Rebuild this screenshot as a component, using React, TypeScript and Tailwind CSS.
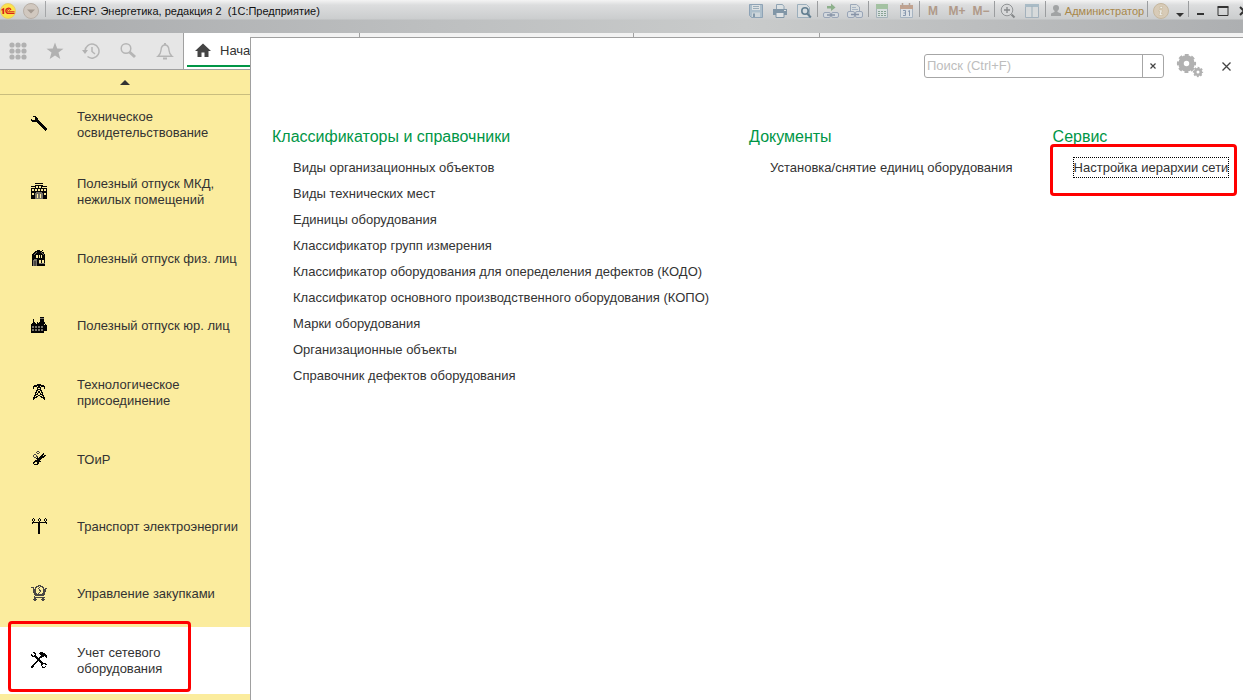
import React from "react";

type PixelArt = string[];

const WRENCH: PixelArt = [
  "..###...........",
  "....##..........",
  "....###.........",
  "#...###.........",
  "########........",
  ".########.......",
  "......####......",
  ".......####.....",
  "........####....",
  ".........####...",
  "..........####..",
  "...........####.",
  "............####",
  ".............###",
  "..............#.",
];

const BUILDING: PixelArt = [
  "....########....",
  "................",
  "....########....",
  "#####..#..######",
  "....#..#..#.....",
  "################",
  "#..#..#..#..#..#",
  "#..#..#..#..#..#",
  "################",
  "#####gggggg#####",
  "#..#gggggggg#..#",
  "#..#gg.gg.gg#..#",
  "####gg.gg.gg####",
  "####gg.gg.gg####",
  "####gg.gg.gg####",
  "####gggggggg####",
];

const HOUSE: PixelArt = [
  "......###..#....",
  "....#######.....",
  "...##g####g##...",
  "..##g######g#...",
  ".##g########g#..",
  ".####..#.#.###..",
  ".####..#.#.###..",
  ".####..#.#.###..",
  ".#############..",
  ".##ggg########..",
  ".#gggg##..#..#..",
  ".#gddg##..#..#..",
  ".#gddg##..#..#..",
  ".#gddg##gggggg..",
  ".#gddg########..",
  ".#gddg########..",
];

const FACTORY: PixelArt = [
  ".........####...",
  ".........gggg...",
  "..#......####...",
  "..#......####...",
  "..#......####...",
  "..##..#.######..",
  ".####.########..",
  "#############.#.",
  "################",
  "#gg#gg#gg#gg####",
  "#gg#gg#gg#gg####",
  "################",
  "#gg#gg#gg#gg####",
  "#gg#gg#gg#gg####",
  "#############...",
  "#############...",
];

const PYLON: PixelArt = [
  "......####......",
  "...##########...",
  "..####.##.####..",
  "..#...####...#..",
  "..#...#..#...#..",
  "......####......",
  ".....##..##.....",
  ".....#.##.#.....",
  "....##.##.##....",
  "....#.#..#.#....",
  "....###..###....",
  "...##..##..##...",
  "...#.##..##.#...",
  "..####....####..",
  "..##........##..",
  "..#..........#..",
];

const REPAIR: PixelArt = [
  "......dd........",
  ".....d..d.......",
  "......dd....#...",
  "...dd......##...",
  "..d..d....##.##.",
  "..d..dd..#####..",
  "...dd.#.#####...",
  ".....######.....",
  "......####......",
  "....#####.......",
  "...#######......",
  "..##..##........",
  "..#...##........",
  "...####.........",
];

const POWER_LINE: PixelArt = [
  "..#.....#.....#.",
  ".#.#...#.#...#.#",
  ".#.#...#.#...#.#",
  "..#.....#.....#.",
  ".###############",
  ".#.....##......#",
  ".......##.......",
  ".......##.......",
  ".......##.......",
  ".......##.......",
  ".......##.......",
  ".......##.......",
  ".......##.......",
  ".......##.......",
  ".......##.......",
  ".......##.......",
];

const CART: PixelArt = [
  ".......ddd......",
  ".....ddd.ddd....",
  "ddd.dd..d..dd...",
  "..d.d..d....d.dd",
  "..ddd...d...ddd.",
  "..ddd...dd..ddd.",
  "..ddd....d..ddd.",
  "..ddd...d...dd..",
  "...ddd.d...ddd..",
  "...ddddddddddd..",
  "....ddddddddd...",
  "...d............",
  "...ddddddddddd..",
  "...dd......dd...",
  "..dddd....dddd..",
  "...dd......dd...",
];

const TOOLS: PixelArt = [
  "..##.....###....",
  "...##...######..",
  "#...#....######.",
  "##.##.....######",
  ".#####...####.##",
  "....###.###....#",
  ".....####.......",
  "......###.......",
  "......####......",
  ".....##.###.....",
  "....##...###....",
  "...##.....#####.",
  "..##......##..##",
  ".##.......#.....",
  "###........#..#.",
  "##.........###..",
];

const INKS: [string, string][] = [
  ["#", "#050505"],
  ["g", "#77736a"],
  ["d", "#4a4744"],
];

function tracePixels(art: PixelArt, ink: string) {
  let d = "";
  art.forEach((row, y) => {
    for (let x = 0; x < row.length; x++) {
      if (row[x] !== ink) continue;
      const start = x;
      while (row[x + 1] === ink) x++;
      const run = x - start + 1;
      d += `M${start} ${y}h${run}v1h-${run}z`;
    }
  });
  return d;
}

function PixelIcon({ art }: { art: PixelArt }) {
  return (
    <svg className="mb-0.5 size-4 shrink-0" viewBox="0 0 16 16" shapeRendering="crispEdges" aria-hidden="true">
      {INKS.map(([ink, color]) => (
        <path key={ink} d={tracePixels(art, ink)} fill={color} />
      ))}
    </svg>
  );
}

const SECTIONS: { label: string; art: PixelArt; current?: boolean }[] = [
  { label: "Техническое освидетельствование", art: WRENCH },
  { label: "Полезный отпуск МКД, нежилых помещений", art: BUILDING },
  { label: "Полезный отпуск физ. лиц", art: HOUSE },
  { label: "Полезный отпуск юр. лиц", art: FACTORY },
  { label: "Технологическое присоединение", art: PYLON },
  { label: "ТОиР", art: REPAIR },
  { label: "Транспорт электроэнергии", art: POWER_LINE },
  { label: "Управление закупками", art: CART },
  { label: "Учет сетевого оборудования", art: TOOLS, current: true },
];

const CATALOGS = [
  "Виды организационных объектов",
  "Виды технических мест",
  "Единицы оборудования",
  "Классификатор групп измерения",
  "Классификатор оборудования для опеределения дефектов (КОДО)",
  "Классификатор основного производственного оборудования (КОПО)",
  "Марки оборудования",
  "Организационные объекты",
  "Справочник дефектов оборудования",
];

function Icon({ children }: { children: React.ReactNode }) {
  return (
    <svg className="size-4 shrink-0" viewBox="0 0 16 16" fill="none" aria-hidden="true">
      {children}
    </svg>
  );
}

function BarButton({ label, children }: { label: string; children: React.ReactNode }) {
  return (
    <button type="button" aria-label={label} className="flex h-5 w-6 items-center justify-center text-xs font-bold text-[#b09a89]">
      {children}
    </button>
  );
}

function Separator() {
  return <span className="mx-px h-4 w-px shrink-0 self-start bg-[#9b9d9f]" />;
}

function TitleBar() {
  return (
    <header className="flex h-[33px] items-start justify-between overflow-hidden bg-[linear-gradient(to_bottom,#f4f4f4_0px,#dcddde_5px,#cbcdce_19px,transparent_20px),linear-gradient(to_right,#a9abad,#bdbfc0_35%,#c9cbcb_60%,#adafb1)] pt-px">
      <div className="flex h-5 items-center">
        <button type="button" aria-label="Главное меню" className="flex w-4 justify-center">
          <svg className="size-4" viewBox="0 0 16 16" aria-hidden="true">
            <circle cx="8" cy="8" r="7.5" fill="#fbe34a" stroke="#e3c66c" strokeWidth="0.8" />
            <path d="M1.5 6.2 4.200 4.800V11H2.400V7.300L1.500 7.800z" fill="#d8231c" />
            <path d="M10.900 6.900A2.600 2.600 0 1 0 8.500 10.400H14.500" fill="none" stroke="#d8231c" strokeWidth="1.300" />
            <path d="M9.500 7.600A1.100 1.100 0 1 0 8.600 8.700H14.500" fill="none" stroke="#d8231c" strokeWidth="0.900" />
          </svg>
        </button>
        <button type="button" aria-label="Меню" className="ml-[7px] flex w-4 justify-center">
          <Icon>
            <circle cx="8" cy="8" r="7.500" fill="#d1c8bf" stroke="#b8afa6" />
            <path d="M4 6.500h8L8 10.500z" fill="#a49a91" />
          </Icon>
        </button>
        <span className="ml-[6px] h-4 w-px self-start bg-[#a4a6a8]" />
        <h1 className="ml-[10px] whitespace-pre text-[11px] leading-5 text-[#111]">1С:ERP. Энергетика, редакция 2  (1С:Предприятие)</h1>
      </div>
      <div className="-mr-[13px] flex h-5 shrink-0 items-center">
        <BarButton label="Сохранить">
          <Icon>
            <path d="M1.500 1.500h13v13h-11l-2-2z" fill="#adbfcc" stroke="#8ea3b6" />
            <path d="M4 2h8v5H4z" fill="#dde1e3" />
            <path d="M5 3.500h6M5 5.500h6" stroke="#9badb9" />
            <path d="M4 9.500h8V14H4z" fill="#ced6db" />
            <path d="M5 10.500h2V14H5z" fill="#8398a9" />
          </Icon>
        </BarButton>
        <BarButton label="Печать">
          <Icon>
            <path d="M4.500 1.500h6l1.500 2V7H4.500z" fill="#dce1e3" stroke="#90a4b4" />
            <path d="M1 6h14v6H1z" fill="#8196a7" />
            <path d="M4 9.500h8v5H4z" fill="#e0e3e5" stroke="#8196a7" />
            <path d="M12 7.500h2" stroke="#dce1e3" />
          </Icon>
        </BarButton>
        <BarButton label="Предварительный просмотр">
          <Icon>
            <path d="M1.500 1.500h9l3 3v10h-12z" fill="#dadee0" stroke="#9baebc" />
            <circle cx="9" cy="8" r="3.200" fill="#d5dce0" stroke="#637f91" strokeWidth="1.600" />
            <path d="m11.300 10.500 3.500 4" stroke="#637f91" strokeWidth="2" />
          </Icon>
        </BarButton>
        <Separator />
        <BarButton label="Получить ссылку">
          <Icon>
            <path d="M4 3h4V.5l4.500 4L8 8V5.500H4z" fill="#8db08b" />
            <rect x="0.500" y="9.500" width="7" height="5" rx="1.500" fill="#d4d9de" stroke="#99a5b7" />
            <rect x="8.500" y="9.500" width="7" height="5" rx="1.500" fill="#d4d9de" stroke="#99a5b7" />
            <path d="M4 12h8" stroke="#8793a6" strokeWidth="1.500" />
          </Icon>
        </BarButton>
        <BarButton label="Перейти по ссылке">
          <Icon>
            <path d="M3.500 8V1.500h6L12.500 4v4" fill="#d8dddf" stroke="#9ca8b8" />
            <path d="M5 4.500h4M5 6.500h6" stroke="#a8b5c4" />
            <rect x="0.500" y="8.500" width="7" height="6" rx="1.500" fill="#d4d9de" stroke="#99a5b7" />
            <rect x="8.500" y="8.500" width="7" height="6" rx="1.500" fill="#d4d9de" stroke="#99a5b7" />
            <path d="M4 11.500h8" stroke="#8793a6" strokeWidth="1.500" />
          </Icon>
        </BarButton>
        <Separator />
        <BarButton label="Калькулятор">
          <Icon>
            <path d="M2.500 1.500h11v13h-11z" fill="#d9dfe0" stroke="#a5b3ba" />
            <path d="M2 1h12v5H2z" fill="#a4c2a2" />
            <path d="M4 8.500h8M4 10.500h8M4 12.500h8" stroke="#87a394" strokeDasharray="2 1" />
          </Icon>
        </BarButton>
        <BarButton label="Календарь">
          <Icon>
            <path d="M2.500 2.500h12v12h-12z" fill="#dce0e4" stroke="#a7b4c1" />
            <path d="M2 2h13v4H2z" fill="#c1a28f" />
            <path d="M4.500 0v4M11.500 0v4" stroke="#b4a296" strokeWidth="1.500" />
            <path d="M5 7.500h2.500v5H5M5.500 10h2M10 8.500l1.500-1v5.500" stroke="#8999af" />
          </Icon>
        </BarButton>
        <Separator />
        <BarButton label="Память">M</BarButton>
        <BarButton label="Прибавить к памяти">M+</BarButton>
        <BarButton label="Вычесть из памяти">M−</BarButton>
        <Separator />
        <BarButton label="Масштаб">
          <Icon>
            <circle cx="7" cy="7" r="5.800" fill="#d8d9da" stroke="#929597" />
            <path d="M4 7h6M7 4v6" stroke="#85888a" strokeWidth="1.300" />
            <path d="m11.500 11.500 3 3" stroke="#85888a" strokeWidth="2" />
          </Icon>
        </BarButton>
        <BarButton label="Панели">
          <Icon>
            <path d="M1.500 1.500h13v13h-13z" fill="#d7dadb" stroke="#a3b1bc" />
            <path d="M1 1h14v3H1z" fill="#a9bbc6" />
            <path d="M8 3v11" stroke="#9dafba" />
          </Icon>
        </BarButton>
        <Separator />
        <button type="button" className="flex h-5 w-[99px] items-center justify-center gap-0.5 text-[11px] text-[#a8874a]">
          <svg className="h-4 w-[14px] shrink-0" viewBox="0 0 14 16" fill="#a1a3a4" aria-hidden="true">
            <circle cx="7" cy="5" r="3" />
            <path d="M5.500 7h3v2l3.500 1.500V13H2v-2.500L5.500 9z" />
          </svg>
          Администратор
        </button>
        <Separator />
        <BarButton label="О программе">
          <Icon>
            <circle cx="8" cy="8" r="7.500" fill="#d8cbb7" stroke="#c5b79e" />
            <path d="M7 3.500h2.500v2H7zM6 7h3.300l-1 4h1.500v1.500H6L7 8.500H6z" fill="#efeee9" stroke="#b9a887" strokeWidth="0.400" />
          </Icon>
        </BarButton>
        <button type="button" aria-label="Параметры" className="flex h-5 w-[14px] items-end justify-center pb-1">
          <svg className="h-1 w-2" viewBox="0 0 8 4" aria-hidden="true"><path d="M0 0h8L4 4z" fill="#333" /></svg>
        </button>
        <Separator />
        <button type="button" aria-label="Свернуть" className="flex h-5 w-[22px] items-center justify-center">
          <Icon><path d="M4 11h7" stroke="#333" strokeWidth="2" /></Icon>
        </button>
        <button type="button" aria-label="Развернуть" className="flex h-5 w-[22px] items-center justify-center">
          <Icon><path d="M3 4.500h10v8H3z" stroke="#333" /><path d="M2.500 4h11" stroke="#333" strokeWidth="2" /></Icon>
        </button>
        <button type="button" aria-label="Закрыть окно" className="flex h-5 w-[22px] items-center justify-center">
          <Icon><path d="m3 4 8 8M11 4l-8 8" stroke="#333" strokeWidth="2" /></Icon>
        </button>
      </div>
    </header>
  );
}

function Tools() {
  const button = "flex h-full flex-1 items-center justify-center";
  return (
    <div className="flex w-[184px] shrink-0 border-r border-[#a0a0a0] bg-[#e6e6e6]">
      <button type="button" aria-label="Меню функций" className={button}>
        <svg className="size-[18px]" viewBox="0 0 18 18" fill="#b1b1b1" aria-hidden="true">
          {[3, 9, 15].map((y) => [3, 9, 15].map((x) => <circle key={`${x}-${y}`} cx={x} cy={y} r="2.600" />))}
        </svg>
      </button>
      <button type="button" aria-label="Избранное" className={button}>
        <svg className="size-[18px]" viewBox="0 0 18 18" fill="#b1b1b1" aria-hidden="true">
          <path d="m9 .5 2.200 6 6.300.2-5 3.900L14.300 17 9 13.400 3.700 17l1.800-6.400-5-3.900 6.300-.2z" />
        </svg>
      </button>
      <button type="button" aria-label="История" className={button}>
        <svg className="size-[18px]" viewBox="0 0 18 18" fill="none" stroke="#b5b5b5" strokeWidth="1.500" aria-hidden="true">
          <path d="M3 9a7 7 0 1 1 2.500 5.500M10 5v4.500l3 2.500" />
          <path d="M0 8h6l-3 4z" fill="#b1b1b1" stroke="none" />
        </svg>
      </button>
      <button type="button" aria-label="Поиск" className={button}>
        <svg className="size-[18px]" viewBox="0 0 18 18" fill="none" stroke="#b5b5b5" aria-hidden="true">
          <circle cx="7" cy="6.500" r="4.800" strokeWidth="1.500" />
          <path d="m10.500 10 5.500 5" strokeWidth="3" />
        </svg>
      </button>
      <button type="button" aria-label="Уведомления" className={button}>
        <svg className="size-[18px]" viewBox="0 0 18 18" fill="none" stroke="#b5b5b5" strokeWidth="1.400" aria-hidden="true">
          <path d="M2 14.300c2-1.500 2.800-3 3-6C5.200 5 6.500 3 9 3s3.800 2 4 5.300c.2 3 1 4.500 3 6z" />
          <path d="M9 1v2M7 16.500h4" strokeWidth="2" />
        </svg>
      </button>
    </div>
  );
}

function Sidebar() {
  return (
    <nav className="flex flex-1 flex-col overflow-hidden bg-[#fbec9e]" aria-label="Разделы">
      <button type="button" aria-label="Прокрутить вверх" className="flex h-[25px] shrink-0 items-center justify-center border-b border-[#c9bd7e]">
        <svg className="h-[5px] w-[10px]" viewBox="0 0 10 5" aria-hidden="true"><path d="M0 5 5 0l5 5z" fill="#333" /></svg>
      </button>
      <ul className="-mt-1">
        {SECTIONS.map(({ label, art, current }) => (
          <li key={label} className={current ? "relative bg-white" : ""}>
            <a href="#" className="flex h-[67px] items-center gap-[30px] pl-[31px] text-[13px] leading-4 text-[#333]">
              <PixelIcon art={art} />
              <span className="w-[164px]">{label}</span>
            </a>
            {current && <span className="pointer-events-none absolute -top-[6px] left-2 h-[71px] w-[183px] rounded-sm border-3 border-[#ff0000]" />}
          </li>
        ))}
      </ul>
    </nav>
  );
}

function LinkGroup({ title, className, children }: { title: string; className?: string; children: React.ReactNode }) {
  return (
    <section className={className}>
      <h2 className="text-base leading-5 text-[#009646]">{title}</h2>
      <ul className="mt-2 pl-[21px] text-[13px] leading-[26px] whitespace-nowrap text-[#333]">{children}</ul>
    </section>
  );
}

function FunctionsPanel() {
  return (
    <main className="flex-1 border-t border-l border-[#a0a0a0] bg-white">
      <div className="flex items-center justify-end pt-4 pr-2.5">
        <form className="flex h-6 w-[240px] overflow-hidden rounded-[3px] border border-[#a6a6a6]" onSubmit={(e) => e.preventDefault()}>
          <input type="text" aria-label="Поиск" placeholder="Поиск (Ctrl+F)" className="min-w-0 flex-1 px-0.5 text-[13px] outline-none placeholder:text-[#bdbdbd]" />
          <button type="button" aria-label="Очистить" className="flex w-[21px] items-center justify-center border-l border-[#a6a6a6]">
            <svg className="size-[6px]" viewBox="0 0 6 6" aria-hidden="true"><path d="m.5.5 5 5M5.500.5l-5 5" stroke="#444" strokeWidth="1.200" /></svg>
          </button>
        </form>
        <button type="button" aria-label="Настройки" className="ml-3">
          <svg className="h-6 w-7" viewBox="0 0 28 24" fill="none" stroke="#b1b1b1" aria-hidden="true">
            <circle cx="10.500" cy="9.500" r="5.500" strokeWidth="5.500" />
            <circle cx="10.500" cy="9.500" r="8.400" strokeWidth="2.400" strokeDasharray="3.800 2.797" strokeDashoffset="1.900" />
            <circle cx="22" cy="18" r="2.800" strokeWidth="2.600" />
            <circle cx="22" cy="18" r="4.400" strokeWidth="1.500" strokeDasharray="1.900 1.556" strokeDashoffset="0.950" />
          </svg>
        </button>
        <button type="button" aria-label="Закрыть" className="ml-[15px] flex h-6 w-[14px] items-center justify-center">
          <svg className="size-[9px]" viewBox="0 0 9 9" aria-hidden="true"><path d="m.5.5 8 8M8.500.5l-8 8" stroke="#444" strokeWidth="1.300" /></svg>
        </button>
      </div>
      <div className="flex gap-10 pt-[49px] pl-[21px]">
        <LinkGroup title="Классификаторы и справочники">
          {CATALOGS.map((name) => (
            <li key={name}><a href="#">{name}</a></li>
          ))}
        </LinkGroup>
        <LinkGroup title="Документы">
          <li><a href="#">Установка/снятие единиц оборудования</a></li>
        </LinkGroup>
        <LinkGroup title="Сервис" className="relative">
          <li><a href="#" className="py-0.5 outline-1 outline-dotted outline-black">Настройка иерархии сети</a></li>
          <li aria-hidden="true" className="pointer-events-none absolute top-[17px] -left-[3px] h-[52px] w-[187px] rounded-sm border-3 border-[#ff0000]" />
        </LinkGroup>
      </div>
    </main>
  );
}

export default function App() {
  return (
    <div className="flex h-screen flex-col overflow-hidden bg-white font-['Liberation_Sans',Arial,sans-serif]">
      <TitleBar />
      <div className="flex min-h-0 flex-1">
        <div className="flex w-[250px] shrink-0 flex-col">
          <div className="flex h-[37px] shrink-0 border-b border-[#a0a0a0]">
            <Tools />
            <button type="button" className="flex flex-1 flex-col overflow-hidden bg-white pb-[2px] pl-[3px] text-[13px] text-[#333]">
              <span className="flex flex-1 items-center gap-[9px] pt-1 pl-[8px]">
                <svg className="size-4 shrink-0" viewBox="0 0 16 16" fill="#444" aria-hidden="true">
                  <path d="M8 .5 0 8h2.500v6h4V9.500h3V14h4V8H16z" />
                </svg>
                Нача
              </span>
              <span className="h-0.5 w-full bg-[#009646]" />
            </button>
          </div>
          <Sidebar />
        </div>
        <div className="flex min-w-0 flex-1 flex-col">
          <div className="flex h-1 shrink-0 bg-[#f2f2f2]">
            <span className="w-[110px] border-r border-[#a0a0a0]" />
            <span className="w-[274px] border-r border-[#a0a0a0]" />
            <span className="w-[186px] border-r border-[#a0a0a0]" />
          </div>
          <FunctionsPanel />
        </div>
      </div>
    </div>
  );
}
